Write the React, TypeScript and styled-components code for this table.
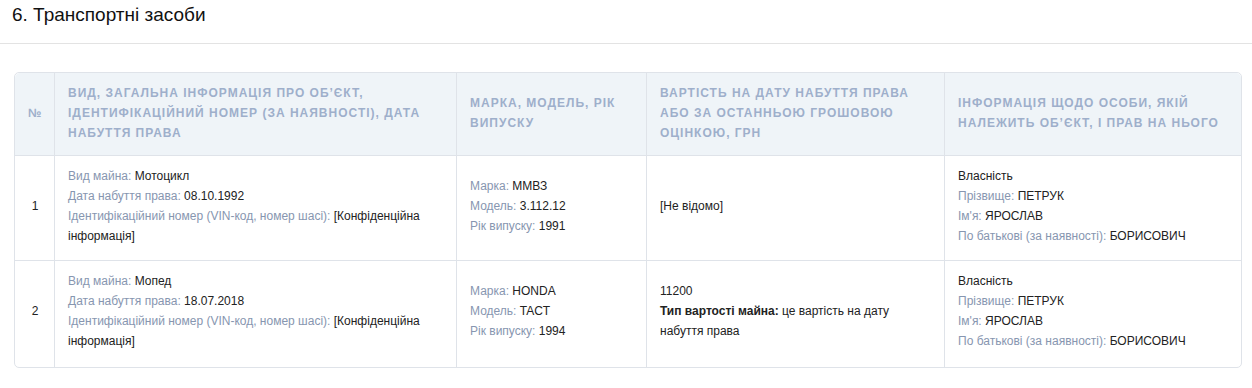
import React from 'react';
import styled, { createGlobalStyle } from 'styled-components';

const GlobalStyle = createGlobalStyle`
  body {
    margin: 0;
    background: #fff;
    font-family: "Liberation Sans", Arial, sans-serif;
    color: #222;
  }
`;

const Section = styled.section`
  width: 1252px;
`;

const Heading = styled.h2`
  margin: 0;
  height: 44px;
  padding: 3px 12px 0;
  box-sizing: border-box;
  font-size: 19px;
  font-weight: normal;
  line-height: 24px;
  color: #111;
  border-bottom: 1px solid #e3e3e3;
`;

const Body = styled.div`
  padding: 28px 10px 20px 14px;
`;

const Table = styled.table`
  width: 100%;
  border-collapse: separate;
  border-spacing: 0;
  border: 1px solid #dfe3e9;
  border-radius: 5px;
  table-layout: fixed;
`;

const Th = styled.th<{ center?: boolean }>`
  background: #eff4f8;
  padding: 10px 13px 12px;
  text-align: ${p => (p.center ? 'center' : 'left')};
  vertical-align: middle;
  font-size: 12px;
  font-weight: bold;
  line-height: 20px;
  letter-spacing: 1px;
  text-transform: uppercase;
  color: #9eafcb;
  border-left: 1px solid #dfe3e9;
  &:first-child {
    border-left: none;
    border-top-left-radius: 5px;
  }
  &:last-child {
    border-top-right-radius: 5px;
  }
`;

const Row = styled.tr`
  &:last-child td {
    padding-bottom: 16px;
  }
`;

const Td = styled.td<{ center?: boolean }>`
  padding: 10px 12px 14px 13px;
  vertical-align: middle;
  text-align: ${p => (p.center ? 'center' : 'left')};
  font-size: 12px;
  line-height: 20px;
  color: #222;
  border-top: 1px solid #dfe3e9;
  border-left: 1px solid #dfe3e9;
  &:first-child {
    border-left: none;
  }
`;

const Line = styled.div``;

const Label = styled.span`
  color: #8796b0;
`;

const Strong = styled.b`
  font-weight: bold;
`;

type Vehicle = {
  n: number;
  kind: string;
  date: string;
  brand: string;
  model: string;
  year: string;
  cost: React.ReactNode;
};

const vehicles: Vehicle[] = [
  {
    n: 1,
    kind: 'Мотоцикл',
    date: '08.10.1992',
    brand: 'ММВЗ',
    model: '3.112.12',
    year: '1991',
    cost: <Line>[Не відомо]</Line>,
  },
  {
    n: 2,
    kind: 'Мопед',
    date: '18.07.2018',
    brand: 'HONDA',
    model: 'TACT',
    year: '1994',
    cost: (
      <>
        <Line>11200</Line>
        <Line>
          <Strong>Тип вартості майна:</Strong> це вартість на дату набуття права
        </Line>
      </>
    ),
  },
];

export default function App() {
  return (
    <Section>
      <GlobalStyle />
      <Heading>6. Транспортні засоби</Heading>
      <Body>
        <Table>
          <colgroup>
            <col style={{ width: 39 }} />
            <col style={{ width: 402 }} />
            <col style={{ width: 190 }} />
            <col style={{ width: 298 }} />
            <col />
          </colgroup>
          <thead>
            <tr>
              <Th center>№</Th>
              <Th>Вид, загальна інформація про об’єкт, ідентифікаційний номер (за наявності), дата набуття права</Th>
              <Th>Марка, модель, рік випуску</Th>
              <Th>Вартість на дату набуття права або за останньою грошовою оцінкою, грн</Th>
              <Th>Інформація щодо особи, якій належить об’єкт, і прав на нього</Th>
            </tr>
          </thead>
          <tbody>
            {vehicles.map(v => (
              <Row key={v.n}>
                <Td center>{v.n}</Td>
                <Td>
                  <Line><Label>Вид майна:</Label> {v.kind}</Line>
                  <Line><Label>Дата набуття права:</Label> {v.date}</Line>
                  <Line><Label>Ідентифікаційний номер (VIN-код, номер шасі):</Label> [Конфіденційна інформація]</Line>
                </Td>
                <Td>
                  <Line><Label>Марка:</Label> {v.brand}</Line>
                  <Line><Label>Модель:</Label> {v.model}</Line>
                  <Line><Label>Рік випуску:</Label> {v.year}</Line>
                </Td>
                <Td>{v.cost}</Td>
                <Td>
                  <Line>Власність</Line>
                  <Line><Label>Прізвище:</Label> ПЕТРУК</Line>
                  <Line><Label>Ім'я:</Label> ЯРОСЛАВ</Line>
                  <Line><Label>По батькові (за наявності):</Label> БОРИСОВИЧ</Line>
                </Td>
              </Row>
            ))}
          </tbody>
        </Table>
      </Body>
    </Section>
  );
}
